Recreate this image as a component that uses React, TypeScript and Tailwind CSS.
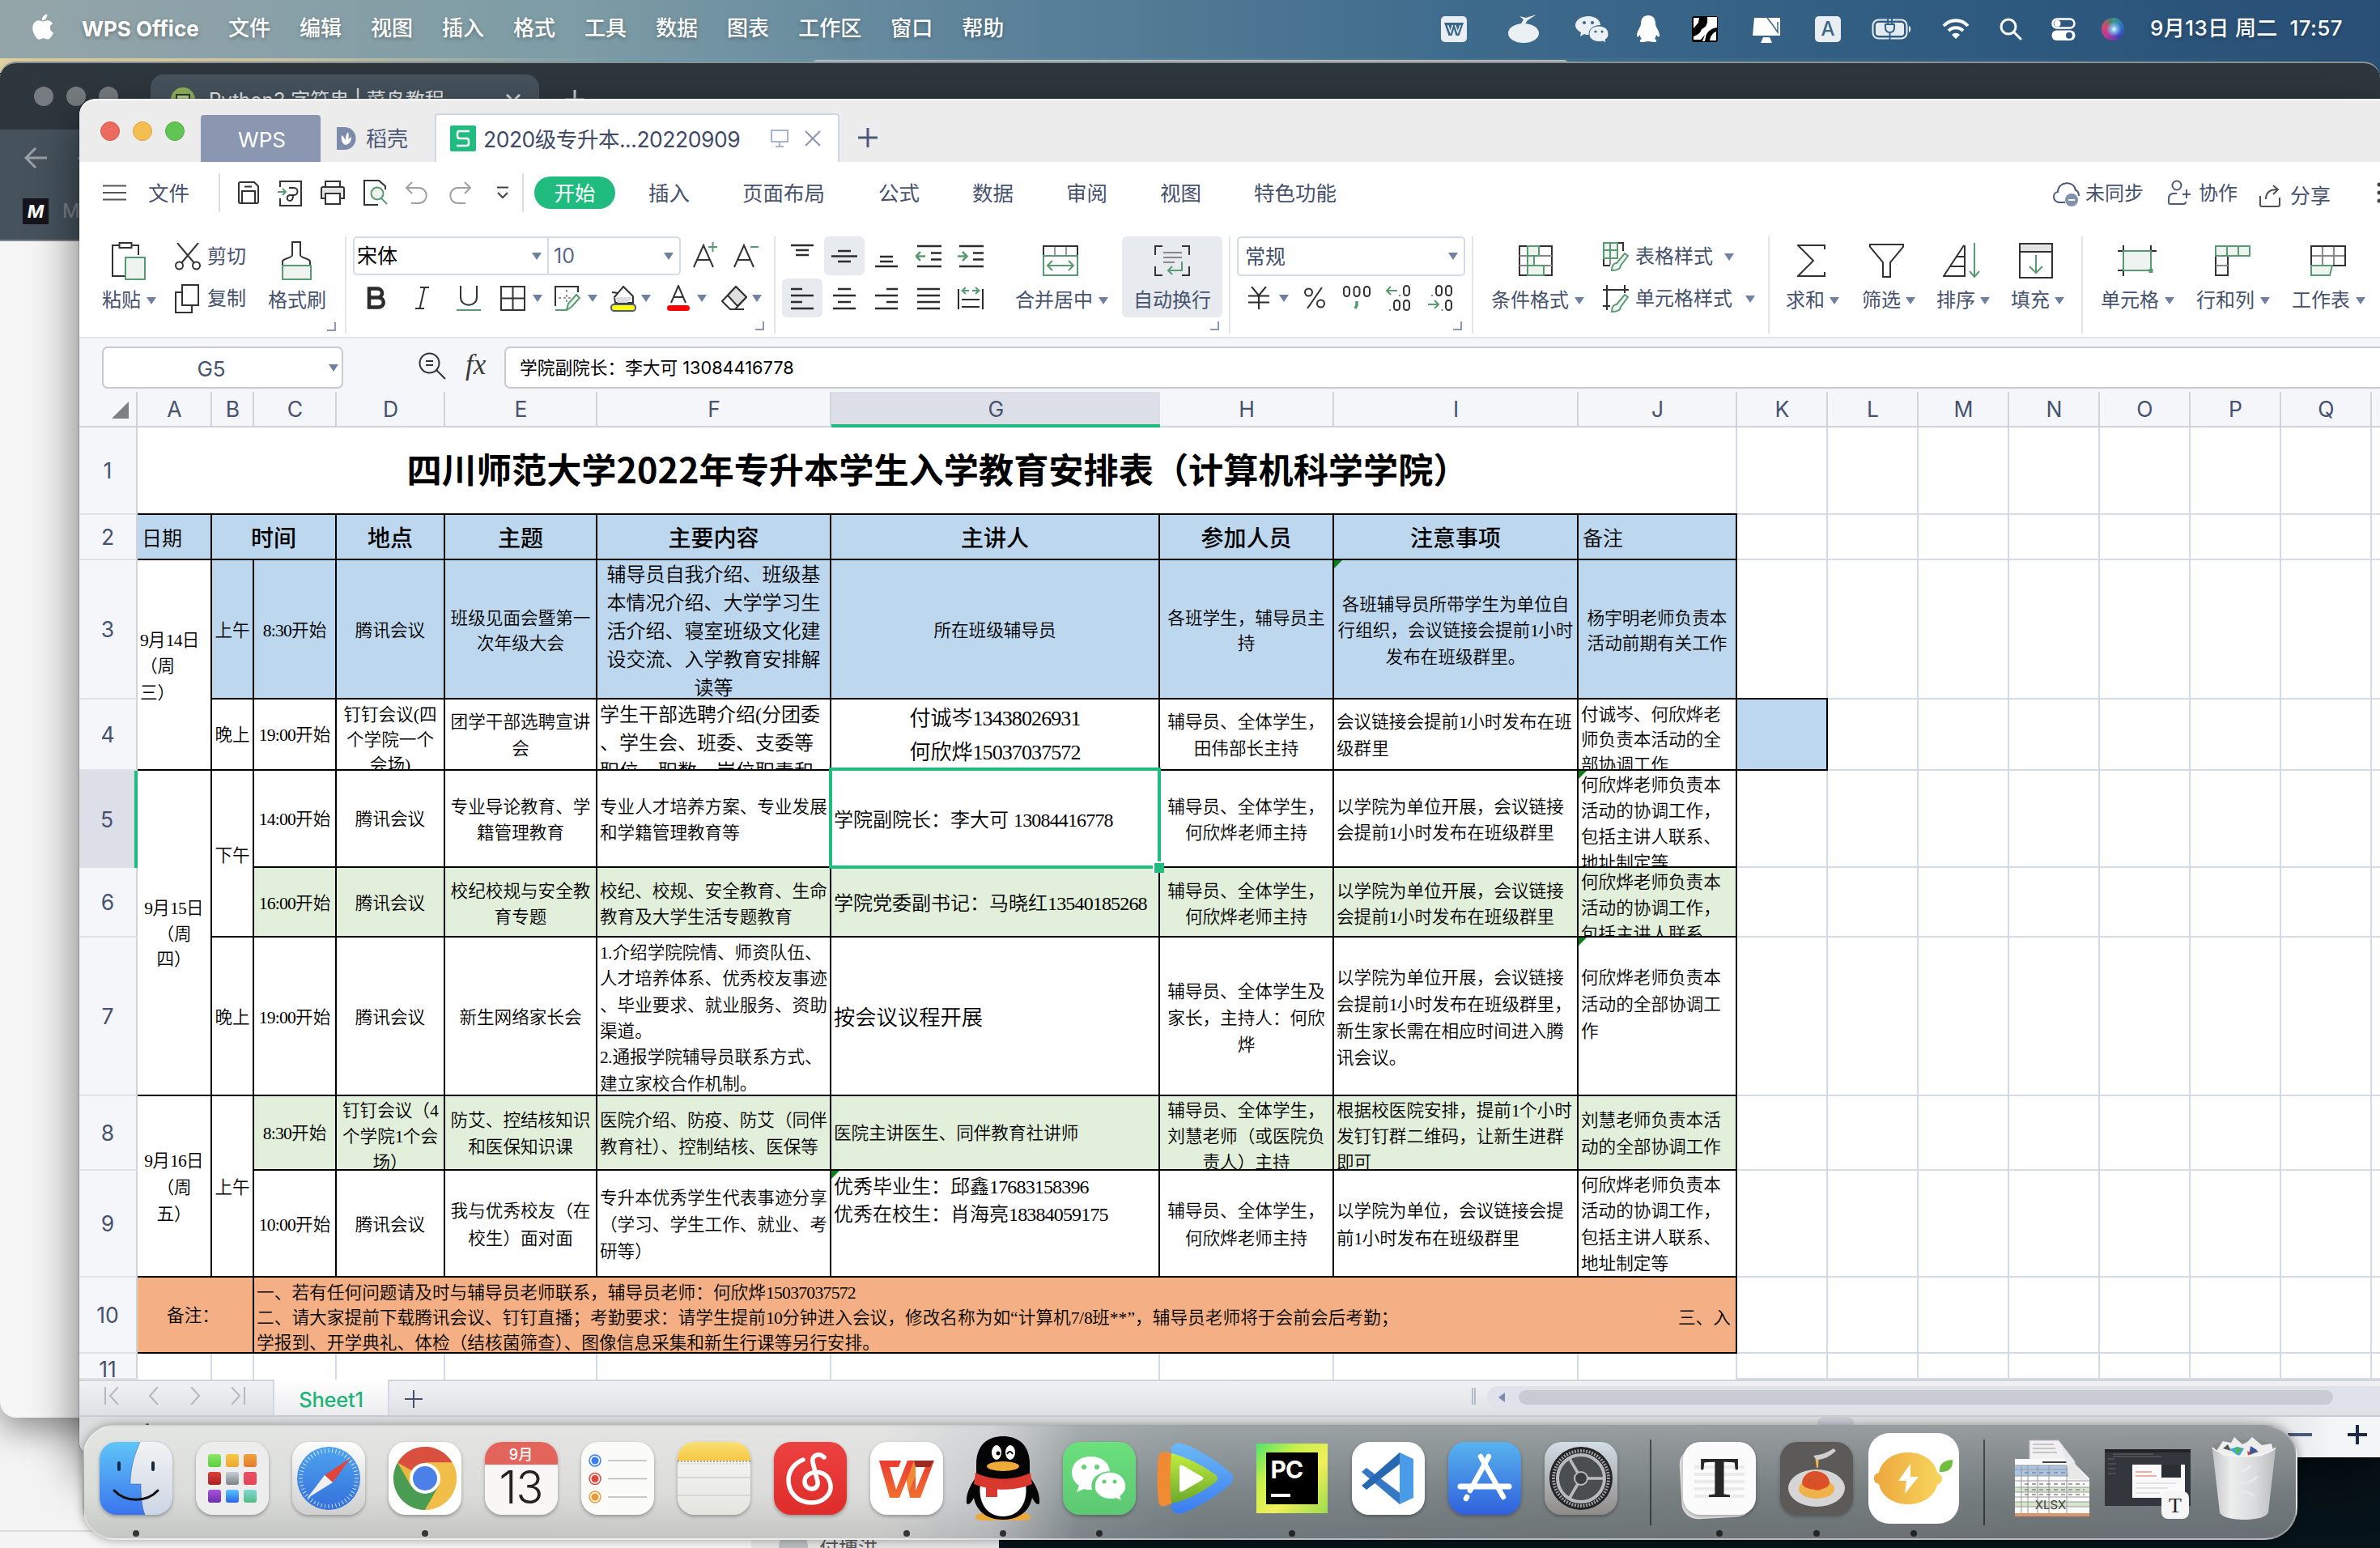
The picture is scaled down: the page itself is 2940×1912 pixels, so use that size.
import React from "react";

type Kids = { children?: React.ReactNode };

const INK = "#333333";
const LEAF = "#5a9a73";
const MIST = "#eef4f0";

function Svg({ w, h, c = "", children, sw = 2, stroke = INK }: Kids & { w: number; h: number; c?: string; sw?: number; stroke?: string }) {
  return (
    <svg width={w} height={h} viewBox={`0 0 ${w} ${h}`} className={`block shrink-0 ${c}`} fill="none" stroke={stroke} strokeWidth={sw}>
      {children}
    </svg>
  );
}

function Caret({ c = "" }: { c?: string }) {
  return (
    <svg width="12" height="9" viewBox="0 0 12 9" className={`block shrink-0 ${c}`}>
      <path d="M0 0h12l-6 9z" fill="#7080a0" />
    </svg>
  );
}

/* ------------------------------------------------------------------ */
/* System menu bar                                                     */
/* ------------------------------------------------------------------ */

const MENUS = ["文件", "编辑", "视图", "插入", "格式", "工具", "数据", "图表", "工作区", "窗口", "帮助"];

function MenuBar() {
  return (
    <div className="relative z-10 flex h-[72px] items-center bg-[linear-gradient(90deg,#94a5a9_0%,#7d9ca5_24%,#5a8199_43%,#3e6a8c_62%,#2f5b80_82%,#294f77_100%)] text-[26px] leading-[32px] font-medium text-white [text-shadow:0_2px_5px_rgba(0,0,0,0.3)]">
      <svg width="28" height="34" viewBox="0 0 28 34" className="mb-[4px] ml-[39px] block" fill="#fff">
        <path d="M19.3 0.5c.3 2-.6 4-1.700 5.400-1.200 1.500-3 2.500-4.700 2.400-.3-1.900.6-3.900 1.700-5.200C15.800 1.600 17.700.7 19.300.5zM26 12.100c-2 1.200-3.200 2.900-3.100 5.300 0 2.800 1.500 4.700 4 5.800-.5 1.500-1.200 3-2.100 4.400-1.300 2-2.700 4-4.900 4-2.100 0-2.800-1.300-5.300-1.300-2.400 0-3.200 1.300-5.200 1.400-2.100.1-3.700-2.200-5-4.100C1.600 23.500-.1 16.500 2.700 12c1.400-2.300 3.700-3.700 6.300-3.800 2.100 0 4 1.400 5.300 1.400 1.200 0 3.500-1.700 6-1.400 1 .1 3.900.4 5.700 3.900z" />
      </svg>
      <div className="ml-[34px] w-[146px] text-[26px] font-bold whitespace-nowrap">WPS Office</div>
      <div className="mb-[2px] ml-[35px] flex gap-[36px]">
        {MENUS.map((m) => (
          <span key={m}>{m}</span>
        ))}
      </div>
      <div className="ml-auto flex items-center">
        <Svg w={34} h={34} stroke="none">
          <rect x="1" y="1" width="32" height="32" rx="5" fill="#e9eef2" />
          <path d="M5 9h24l-5.500 16h-4L17 17l-2.500 8h-4z" fill="#3b6686" />
          <path d="M9.500 12l3.200 9 2.800-9M18.500 12l3.200 9L25 12" stroke="#e9eef2" strokeWidth="1.500" fill="none" />
        </Svg>
        <Svg w={40} h={36} c="ml-[49px]" stroke="none">
          <ellipse cx="20" cy="23" rx="19" ry="12" fill="#eaf0f3" />
          <path d="M16 13l4-7-5-4 8 2 13-4-11 7-4 6z" fill="#eaf0f3" />
        </Svg>
        <Svg w={42} h={34} c="ml-[44px]" stroke="none">
          <path d="M16 1c9 0 15 5 15 11-8 0-15 5-14 12-2 0-5 0-6-1l-5 3 1-5c-4-2-7-5-7-9C0 6 7 1 16 1z" fill="#eaf0f3" />
          <path d="M29 13c7 0 12 4 12 10 0 3-1 5-4 7l1 4-4-2c-9 2-17-2-17-9 0-6 5-10 12-10z" fill="#eaf0f3" stroke="#3b6686" strokeWidth="1" />
          <g fill="#3b6686">
            <circle cx="11" cy="9" r="2" />
            <circle cx="21" cy="9" r="2" />
            <circle cx="25" cy="20" r="1.600" />
            <circle cx="33" cy="20" r="1.600" />
          </g>
        </Svg>
        <Svg w={30} h={34} c="ml-[33px]" stroke="none">
          <path d="M15 0c7 0 9 5 9 11 0 3 5 8 5 14 0 2-2 2-4-1-1 3-1 4-2 5 3 1 3 4 0 4-4 0-6-1-8-1s-4 1-8 1c-3 0-3-3 0-4-1-1-2-2-2-5-2 3-4 3-4 1 0-6 5-11 5-14 0-6 2-11 9-11z" fill="#fff" />
        </Svg>
        <Svg w={32} h={32} c="ml-[39px]" stroke="none">
          <rect width="32" height="32" rx="3" fill="#000" />
          <path d="M19 1h12v13c-7 1-13 5-14 12l-1 5h-3l3-8-5 6H2v-4c6-2 9-5 10-9 4-2 8-4 7-15z" fill="#fff" />
          <path d="M2 2h7L8 8 2 15z" fill="#fff" />
          <path d="M30 19c-5 2-7 6-8 11h8z" fill="#fff" />
        </Svg>
        <Svg w={38} h={34} c="ml-[41px]" stroke="none">
          <path d="M4 3h32v22H2z" fill="#fff" />
          <path d="M15 27h8l3 7H12z" fill="#fff" />
          <path d="M20 3l7 9 6 9V8" stroke="#3b6686" strokeWidth="1.500" fill="none" />
        </Svg>
        <div className="ml-[41px] flex h-[32px] w-[32px] items-center justify-center rounded-[5px] bg-[#e9eef2] text-[24px] text-[#3a6386] [text-shadow:none]">A</div>
        <Svg w={50} h={26} c="ml-[38px]" stroke="#e3ebf0">
          <rect x="1.500" y="1.500" width="42" height="23" rx="7" />
          <rect x="5" y="5" width="35" height="16" rx="3.500" fill="#e3ebf0" stroke="none" />
          <path d="M46 9c3 1 3 7 0 8z" fill="#e3ebf0" stroke="none" />
          <path d="M17 7v4c0 5 3 6 5.500 6s5.500-1 5.500-6V7zM20 0v7M25 0v7M22.500 17v9" fill="#e3ebf0" stroke="#33608a" strokeWidth="2" />
        </Svg>
        <Svg w={34} h={26} c="ml-[37px]" stroke="#fff" sw={4}>
          <path d="M2 9C10 0 24 0 32 9M8 15c5-5 13-5 18 0" />
          <path d="M17 25l-5-5c3-3 7-3 10 0z" fill="#fff" stroke="none" />
        </Svg>
        <Svg w={28} h={28} c="ml-[37px]" stroke="#fff" sw={3}>
          <circle cx="11" cy="11" r="9" />
          <path d="M18 18l8 8" strokeLinecap="round" />
        </Svg>
        <Svg w={30} h={28} c="ml-[36px]" stroke="#fff" sw={2.5}>
          <rect x="1.500" y="1.500" width="27" height="11" rx="5.500" />
          <circle cx="7.500" cy="7" r="4" fill="#fff" stroke="none" />
          <rect x="0.500" y="15.500" width="29" height="12.500" rx="6" fill="#fff" stroke="none" />
          <circle cx="22" cy="21.700" r="4" fill="#31597f" stroke="none" />
        </Svg>
        <div className="ml-[32px] h-[28px] w-[28px] rounded-full bg-[radial-gradient(circle_at_55%_50%,#ffffff_0%,#7ab6e8_18%,transparent_45%),conic-gradient(from_0deg,#3a9b8a,#2b6fc4,#473dba,#b03a9b,#d8456b,#34906f)]" />
        <div className="mr-[33px] mb-[2px] ml-[32px] w-[251px] text-[26px] tracking-[0.016em] whitespace-pre">9月13日 周二  17:57</div>
      </div>
    </div>
  );
}

/* ------------------------------------------------------------------ */
/* Browser window in the background                                    */
/* ------------------------------------------------------------------ */

function BrowserWindow() {
  return (
    <div className="absolute top-[76px] left-0 h-[1675px] w-[2940px] overflow-hidden rounded-[20px] border-t-2 border-[#8b9296] bg-[#f6f6f6] shadow-[0_16px_40px_rgba(0,0,0,0.4)]">
      <div className="flex h-[82px] bg-[#2d373d]">
        <div className="mt-[29px] ml-[42px] flex gap-[16px]">
          <span className="h-[24px] w-[24px] rounded-full bg-[#767c7f]" />
          <span className="h-[24px] w-[24px] rounded-full bg-[#767c7f]" />
          <span className="h-[24px] w-[24px] rounded-full bg-[#767c7f]" />
        </div>
        <div className="mt-[14px] ml-[40px] flex h-[68px] w-[480px] rounded-t-[16px] bg-[#46535d] pt-[16px] pl-[25px] text-[24px] leading-[32px] text-[#e6e9eb]">
          <span className="flex h-[30px] w-[30px] justify-center rounded-full bg-[#8fb45c] pt-[8px]">
            <span className="h-[12px] w-[18px] border-2 border-[#2f3b2b] bg-[#b9d391]" />
          </span>
          <span className="ml-[17px] w-[367px] whitespace-nowrap">Python3 字符串 | 菜鸟教程</span>
          <Svg w={18} h={18} c="mt-[8px]" stroke="#d5dadd" sw={3}>
            <path d="M1 1l16 16M17 1L1 17" />
          </Svg>
        </div>
        <Svg w={24} h={24} c="mt-[33px] ml-[32px]" stroke="#c5cacd" sw={3}>
          <path d="M12 0v24M0 12h24" />
        </Svg>
      </div>
      <div className="h-[138px] border-b-2 border-[#7d868c] bg-[#46535d]">
        <div className="flex h-[70px] items-center pl-[30px]">
          <Svg w={28} h={26} stroke="#9aa2a7" sw={3}>
            <path d="M28 13H2M14 1L2 13l12 12" />
          </Svg>
          <span className="ml-[38px] h-[3px] w-[10px] bg-[#77828a]" />
        </div>
        <div className="flex h-[62px] items-center pl-[28px] text-[24px] text-[#7b868e]">
          <span className="flex h-[32px] w-[32px] items-center justify-center bg-[#15161b] text-[22px] font-bold text-white italic">M</span>
          <span className="ml-[17px]">M</span>
        </div>
      </div>
    </div>
  );
}

/* ------------------------------------------------------------------ */
/* Spreadsheet window: title bar and menus                             */
/* ------------------------------------------------------------------ */

function TitleBar() {
  return (
    <div className="flex h-[78px] items-end rounded-tl-[20px] border-t-2 border-white bg-[#ececec]">
      <div className="mb-[26px] ml-[26px] flex gap-[16px]">
        <span className="h-[24px] w-[24px] rounded-full border border-[#d9574c] bg-[#ec6a5e]" />
        <span className="h-[24px] w-[24px] rounded-full border border-[#dfa33c] bg-[#f4bf50]" />
        <span className="h-[24px] w-[24px] rounded-full border border-[#52a93f] bg-[#61c555]" />
      </div>
      <div className="ml-[20px] flex h-[58px] w-[148px] items-center justify-center rounded-t-[4px] bg-[#8b97b1] pt-[3px] pl-[3px] text-[26px] text-white">WPS</div>
      <div className="flex h-[58px] w-[141px] items-center pl-[20px] text-[26px] text-[#4d5a78]">
        <Svg w={24} h={28} stroke="none">
          <path d="M0 0h10c18 1 18 27 0 28H0z" fill="#7d8bab" />
          <path d="M6 10c2 1 4 4 5 7 0-4 0-8 3-11 1 4 1 6 0 9l4-3c0 5-2 9-7 10-4-1-6-6-5-12z" fill="#fff" />
        </Svg>
        <span className="ml-[12px]">稻壳</span>
      </div>
      <div className="flex h-[60px] w-[500px] items-center rounded-t-[4px] border-2 border-b-0 border-[#cfd7e8] bg-white pl-[17px] text-[#3f4a66]">
        <div className="flex h-[32px] w-[32px] items-center justify-center rounded-[2px] bg-[#20bb7e]">
          <Svg w={18} h={22} stroke="#fff" sw={2.5}>
            <path d="M17 2H4.500Q2 2 2 5v3q0 3 2.500 3h9q2.500 0 2.500 3v3q0 3-2.500 3H1" />
          </Svg>
        </div>
        <span className="mt-[3px] ml-[9px] w-[355px] text-[26.500px] tracking-[-0.018em] whitespace-nowrap">2020级专升本...20220909</span>
        <Svg w={22} h={22} stroke="#a9b4cd">
          <path d="M1 1h20v14H1zM11 15v6M6 21h10" />
        </Svg>
        <Svg w={20} h={20} c="ml-[20px]" stroke="#8b97b1">
          <path d="M1 1l18 18M19 1L1 19" />
        </Svg>
      </div>
      <Svg w={24} h={24} c="mb-[18px] ml-[23px]" stroke="#4d5a78" sw={3}>
        <path d="M12 0v24M0 12h24" />
      </Svg>
    </div>
  );
}

function MenuRow() {
  return (
    <div className="flex h-[80px] items-start text-[25.500px] leading-[32px] text-[#46526e]">
      <div className="flex h-[76px] items-center">
        <Svg w={29} h={20} c="ml-[29px]" stroke="#555">
          <path d="M0 1.500h29M0 10h29M0 18.500h29" />
        </Svg>
        <span className="mt-[2px] ml-[27px]">文件</span>
        <span className="ml-[36px] h-[48px] w-[2px] bg-[#dcdee3]" />
        <Svg w={26} h={28} c="ml-[22px]">
          <path d="M1 3q0-2 2-2h17l5 5v19q0 2-2 2H3q-2 0-2-2zM5 27V12h16v15M8 6.500h9" />
        </Svg>
        <Svg w={30} h={32} c="mt-[1px] ml-[23px]">
          <path d="M3 8V1h26v30H3v-9" />
          <path d="M14 9h6c6 0 6 9 0 9h-4c-6 0-5 7-1 7 3 0 4-3 4-7" />
          <path d="M0 14h10M6 10l4 4-4 4" stroke={LEAF} />
        </Svg>
        <Svg w={30} h={30} c="ml-[23px]">
          <path d="M6 8V1h18v7" />
          <path d="M5 22H1V10q0-2 2-2h24q2 0 2 2v12h-4" fill="#e3e3e3" />
          <path d="M6 16h18v13H6z" fill="#fff" />
        </Svg>
        <Svg w={30} h={32} c="ml-[23px]">
          <path d="M18 31H1V1h18l8 7v4" />
          <circle cx="17" cy="17" r="7.500" fill={MIST} stroke={LEAF} />
          <path d="M22 23l7 7" stroke={LEAF} />
        </Svg>
        <Svg w={27} h={28} c="ml-[22px]" stroke="#a0a0a0">
          <path d="M8 1L1 8l7 7M1 8h15c13 0 13 19 0 19H7" />
        </Svg>
        <Svg w={27} h={28} c="ml-[27px]" stroke="#a0a0a0">
          <path d="M19 1l7 7-7 7M26 8H11c-13 0-13 19 0 19h9" />
        </Svg>
        <Svg w={14} h={16} c="ml-[32px]" stroke="#444">
          <path d="M0 1.500h14M1 8l6 6 6-6" />
        </Svg>
        <span className="ml-[17px] h-[48px] w-[2px] bg-[#dcdee3]" />
        <span className="ml-[13px] flex h-[40px] w-[100px] items-center justify-center rounded-full bg-[#20bb7e] pt-[2px] text-white">开始</span>
        <div className="mt-[2px] flex">
          <span className="ml-[41px]">插入</span>
          <span className="ml-[65px]">页面布局</span>
          <span className="ml-[66px]">公式</span>
          <span className="ml-[65px]">数据</span>
          <span className="ml-[65px]">审阅</span>
          <span className="ml-[65px]">视图</span>
          <span className="ml-[65px]">特色功能</span>
        </div>
      </div>
      <div className="mr-[-2px] ml-auto flex h-[76px] items-center text-[24px]">
        <Svg w={34} h={32} c="mt-[4px]" stroke="#4d5a78">
          <path d="M15 26H8C-1 25-1 14 6 13c0-13 20-15 22-2 3 1 4 3 4 7" />
          <circle cx="23" cy="23" r="8" fill="#8391b1" stroke="none" />
          <path d="M19 23h8" stroke="#fff" />
        </Svg>
        <span className="mt-[2px] ml-[6px]">未同步</span>
        <Svg w={30} h={32} c="ml-[29px]" stroke="#4d5a78">
          <circle cx="12" cy="7" r="5.500" />
          <path d="M12 17H8c-4 0-6 3-6 7v4q0 2 2 2h16q3 0 3-3M19 18h10M24 12v11" />
        </Svg>
        <span className="mt-[2px] ml-[9px]">协作</span>
        <Svg w={29} h={28} c="mt-[8px] ml-[27px]" stroke="#4f4f52">
          <path d="M1 14v11q0 2 2 2h20q2 0 2-2v-9" />
          <path d="M8 18c0-8 4-12 14-12M17 1l6 5-6 6" />
        </Svg>
        <span className="mt-[7px] ml-[9px] text-[25px]">分享</span>
        <Svg w={6} h={26} c="ml-[57px]" stroke="none">
          <g fill="#444">
            <circle cx="3" cy="3" r="2.500" />
            <circle cx="3" cy="13" r="2.500" />
            <circle cx="3" cy="23" r="2.500" />
          </g>
        </Svg>
      </div>
    </div>
  );
}

/* ------------------------------------------------------------------ */
/* Ribbon                                                              */
/* ------------------------------------------------------------------ */

function Corner({ c = "" }: { c?: string }) {
  return <span className={`block h-[11px] w-[11px] shrink-0 border-r-2 border-b-2 border-[#8b97b1] ${c}`} />;
}

function Big({ c, iconC, label, caret = "", children }: Kids & { c: string; iconC: string; label: string; caret?: string }) {
  return (
    <div className={`shrink-0 pt-[6px] ${c}`}>
      <div className={`flex h-[48px] items-center ${iconC}`}>{children}</div>
      <div className="mt-[12px] flex h-[26px] items-center whitespace-nowrap">
        {label}
        {caret && <Caret c={caret} />}
      </div>
    </div>
  );
}

function Lines({ rows, c = "" }: { rows: [number, number, number][]; c?: string }) {
  return (
    <Svg w={32} h={30} c={c} sw={2.5} stroke="#2c2c2c">
      {rows.map(([x1, x2, y]) => (
        <path key={y} d={`M${x1} ${y}H${x2}`} />
      ))}
    </Svg>
  );
}

function Sq({ on = false, children }: Kids & { on?: boolean }) {
  return <div className={`flex h-[48px] w-[50px] items-center justify-center rounded-[6px] ${on ? "bg-[#e7eaee]" : ""}`}>{children}</div>;
}

function Ribbon() {
  return (
    <div className="flex h-[138px] overflow-hidden border-b-2 border-[#e3e5ea] pt-[12px] text-[24px] leading-[26px] text-[#46526e]">
      <div className="flex h-[120px] w-[330px] shrink-0 border-r-2 border-[#e3e5ea]">
        <Big c="ml-[28px] w-[68px]" iconC="pl-[12px]" label="粘贴" caret="ml-[7px]">
          <Svg w={43} h={47}>
            <path d="M10 4H1v38h17M25 4h8v12" />
            <path d="M9.500 1h15v6h-15z" />
            <path d="M17 19h24v27H17z" fill={MIST} stroke={LEAF} />
          </Svg>
        </Big>
        <div className="ml-[22px] w-[88px]">
          <div className="flex h-[50px] items-center gap-[8px]">
            <Svg w={32} h={34}>
              <path d="M3 0l21 25M29 0L8 25" />
              <circle cx="5.500" cy="28" r="4.500" />
              <circle cx="26.500" cy="28" r="4.500" />
            </Svg>
            剪切
          </div>
          <div className="mt-[2px] flex h-[50px] items-center gap-[8px]">
            <Svg w={32} h={36}>
              <path d="M9 10H1v25h20v-9" />
              <path d="M9 1h20v25H9z" fill="#fff" />
            </Svg>
            复制
          </div>
        </div>
        <Big c="ml-[27px] w-[72px]" iconC="pl-[17px]" label="格式刷">
          <Svg w={37} h={48}>
            <path d="M1 30v-5c0-4 12-4 12-8V1h10v16c0 4 12 4 12 8v5" />
            <path d="M1 30h35v17H1z" fill={MIST} stroke={LEAF} />
          </Svg>
        </Big>
        <Corner c="mb-[3px] ml-[1px] self-end" />
      </div>

      <div className="h-[120px] w-[530px] shrink-0 border-r-2 border-[#e3e5ea] pl-[8px]">
        <div className="flex h-[48px] items-center">
          <div className="flex h-[48px] w-[242px] items-center rounded-l-[5px] border-2 border-[#d3dbe9] pl-[3px] text-[25px] text-black">
            宋体
            <Caret c="mr-[7px] ml-auto" />
          </div>
          <div className="flex h-[48px] w-[163px] items-center rounded-r-[5px] border-2 border-l-0 border-[#d3dbe9] pl-[6px] text-[25px] text-[#5a6785]">
            10
            <Caret c="mr-[7px] ml-auto" />
          </div>
          <Svg w={31} h={32} c="mb-[2px] ml-[15px]">
            <path d="M1 31L13 4l12 27M5 22h16" />
            <path d="M19 6h11M24.500 0v12" stroke={LEAF} />
          </Svg>
          <Svg w={31} h={32} c="mb-[2px] ml-[19px]">
            <path d="M1 31L13 4l12 27M5 22h16" />
            <path d="M21 6h10" stroke={LEAF} />
          </Svg>
        </div>
        <div className="mt-[4px] flex h-[48px] items-center">
          <Svg w={24} h={28} c="ml-[17px]" sw={4.5} stroke="#2c2c2c">
            <path d="M3 2.500h10c8 0 8 11 0 11H3zM3 13.500h11c9 0 9 12 0 12H3z" />
          </Svg>
          <Svg w={17} h={28} c="ml-[36px]">
            <path d="M6 1h11M0 27h11M11.500 1l-6 26" />
          </Svg>
          <Svg w={30} h={31} c="ml-[34px]">
            <path d="M5 0v14c0 13 20 13 20 0V0" />
            <path d="M0 30h30" stroke={LEAF} />
          </Svg>
          <Svg w={31} h={31} c="ml-[24px]">
            <path d="M1 1h29v29H1zM15.500 1v29M1 15.500h29" />
          </Svg>
          <Caret c="ml-[9px]" />
          <Svg w={33} h={31} c="ml-[15px]">
            <path d="M29 8V1H1v24" />
            <path d="M15 5v18M5 15h16" stroke="#999" strokeDasharray="3 3" />
            <path d="M1 30h14l2-8 10-11 4 4-10 11-6 4" stroke={LEAF} fill={MIST} />
          </Svg>
          <Caret c="ml-[8px]" />
          <Svg w={32} h={33} c="ml-[16px]">
            <path d="M5 15L16 2l12 12v8H6z" fill="#fff" />
            <path d="M5 15h22l-6 7H9z" fill="#ddd" stroke="none" />
            <path d="M2 9l8 1" />
            <rect x="1" y="24" width="30" height="8" rx="3.500" fill="#ffff00" stroke="#4a5a85" />
          </Svg>
          <Caret c="ml-[6px]" />
          <Svg w={28} h={33} c="ml-[20px]">
            <path d="M5 22L14 1l9 21M8 15h12" />
            <rect x="0" y="25" width="28" height="7" rx="3.500" fill="#ff0000" stroke="none" />
          </Svg>
          <Caret c="ml-[9px]" />
          <Svg w={32} h={30} c="ml-[18px]">
            <path d="M18 1l13 13-14 15h-6L1 19z" fill="#fff" />
            <path d="M18 1l13 13-11 11L8 12z" fill="#e0e0e0" />
            <path d="M11 29h17" />
          </Svg>
          <Caret c="ml-[6px]" />
        </div>
        <Corner c="mt-[5px] mr-[12px] ml-auto" />
      </div>

      <div className="flex h-[120px] w-[562px] shrink-0 border-r-2 border-[#e3e5ea] pl-[8px]">
        <div className="shrink-0">
          <div className="flex gap-[2px]">
            <Sq>
              <Lines rows={[[2, 30, 2], [8, 24, 8], [8, 24, 14]]} />
            </Sq>
            <Sq on>
              <Lines rows={[[8, 24, 9], [0, 32, 15.500], [8, 24, 22]]} />
            </Sq>
            <Sq>
              <Lines rows={[[8, 24, 16], [8, 24, 22], [2, 30, 28]]} />
            </Sq>
            <Sq>
              <Svg w={32} h={30} sw={2.5} stroke="#2c2c2c">
                <path d="M2 3h30M19 11.500h13M19 19.500h13M2 28h30" />
                <path d="M12 15.500H1M6 10l-5.500 5.500L6 21" stroke={LEAF} />
              </Svg>
            </Sq>
            <Sq>
              <Svg w={32} h={30} sw={2.5} stroke="#2c2c2c">
                <path d="M2 3h30M19 11.500h13M19 19.500h13M2 28h30" />
                <path d="M0 15.500h11M6 10l5.500 5.500L6 21" stroke={LEAF} />
              </Svg>
            </Sq>
          </div>
          <div className="mt-[4px] flex gap-[2px]">
            <Sq on>
              <Lines rows={[[2, 16, 4], [2, 30, 12], [2, 16, 20], [2, 30, 28]]} />
            </Sq>
            <Sq>
              <Lines rows={[[8, 24, 4], [2, 30, 12], [8, 24, 20], [2, 30, 28]]} />
            </Sq>
            <Sq>
              <Lines rows={[[16, 30, 4], [2, 30, 12], [16, 30, 20], [2, 30, 28]]} />
            </Sq>
            <Sq>
              <Lines rows={[[2, 30, 4], [2, 30, 12], [2, 30, 20], [2, 30, 28]]} />
            </Sq>
            <Sq>
              <Svg w={32} h={30} stroke="#2c2c2c">
                <path d="M1 4v25M31 4v25M5 17h22M5 26h22" />
                <path d="M5 6h9M18 6h9M10 2L5.500 6l4.500 4M22 2l4.500 4-4.500 4" stroke={LEAF} />
              </Svg>
            </Sq>
          </div>
        </div>
        <Big c="ml-[30px] w-[116px]" iconC="pl-[34px]" label="合并居中" caret="ml-[7px]">
          <Svg w={44} h={38}>
            <path d="M1 13V1h42v12" />
            <path d="M15 2v10M29 2v10" stroke="#999" />
            <path d="M1 13h42v24H1z" fill="#fff" stroke={LEAF} />
            <path d="M6 25h32M12 19l-6 6 6 6M32 19l6 6-6 6" stroke={LEAF} />
          </Svg>
        </Big>
        <div className="ml-[16px] w-[124px]">
          <div className="h-[100px] rounded-[6px] bg-[#e7eaee]">
            <Big c="pl-[14px]" iconC="pl-[26px]" label="自动换行">
              <Svg w={44} h={38}>
                <path d="M10 1H1v11M34 1h9v11M1 26v11h9M43 26v11h-9" />
                <path d="M11 9h23M11 15h23M11 21h14" stroke="#888" />
                <path d="M34 20v11H17M22 26l-5 5 5 5" stroke={LEAF} />
              </Svg>
            </Big>
          </div>
          <Corner c="mt-[5px] mr-[4px] ml-auto" />
        </div>
      </div>

      <div className="h-[120px] w-[300px] shrink-0 border-r-2 border-[#e3e5ea] pl-[8px]">
        <div className="flex h-[49px] w-[282px] items-center rounded-[5px] border-2 border-[#d3dbe9] pl-[8px] text-[25px]">
          常规
          <Caret c="mr-[7px] ml-auto" />
        </div>
        <div className="mt-[3px] flex h-[48px] items-center text-[#333]">
          <Svg w={26} h={28} c="ml-[14px]" stroke="#2c2c2c">
            <path d="M4 0l9 11 9-11M0 11.500h26M0 19.500h26M13 11v17" />
          </Svg>
          <Caret c="ml-[12px]" />
          <Svg w={26} h={26} c="ml-[19px]">
            <circle cx="5.500" cy="6" r="4.500" />
            <circle cx="20.500" cy="20" r="4.500" />
            <path d="M22 0L4 26" />
          </Svg>
          <Svg w={34} h={30} c="ml-[22px]">
            <rect x="1" y="1" width="7" height="12" rx="3.500" />
            <rect x="13.500" y="1" width="7" height="12" rx="3.500" />
            <rect x="26" y="1" width="7" height="12" rx="3.500" />
            <path d="M17 19v5l-2 4" stroke={LEAF} strokeWidth="3.500" />
          </Svg>
          <Svg w={31} h={33} c="ml-[19px]">
            <rect x="22" y="1" width="7" height="12" rx="3.500" />
            <rect x="10" y="19" width="7" height="12" rx="3.500" />
            <rect x="22" y="19" width="7" height="12" rx="3.500" />
            <path d="M14 7H1M6 2L1 7l5 5M17 12v2M5 30v2" stroke={LEAF} />
          </Svg>
          <Svg w={31} h={33} c="ml-[21px]">
            <rect x="10" y="1" width="7" height="12" rx="3.500" />
            <rect x="22" y="1" width="7" height="12" rx="3.500" />
            <rect x="22" y="19" width="7" height="12" rx="3.500" />
            <path d="M0 24h13M8 19l5 5-5 5M5 12v2M17.500 30v2" stroke={LEAF} />
          </Svg>
        </div>
        <Corner c="mt-[5px] mr-[12px] ml-auto" />
      </div>

      <div className="flex h-[120px] w-[366px] shrink-0 border-r-2 border-[#e3e5ea]">
        <Big c="ml-[22px] w-[116px]" iconC="pl-[34px]" label="条件格式" caret="ml-[7px]">
          <Svg w={42} h={38}>
            <path d="M1 1h40v36H1z" />
            <path d="M1 13h40M1 25h40" stroke="#888" />
            <path d="M11 1h14v12H11zM11 13h8v12h-8zM11 25h20v12H11z" fill={MIST} stroke={LEAF} />
          </Svg>
        </Big>
        <div className="ml-[22px]">
          <div className="flex h-[50px] items-center">
            <Svg w={32} h={36}>
              <path d="M9 29H1V1h24v10" />
              <path d="M1 1h17v19H1zM1 10h17M9 1v19" fill={MIST} stroke={LEAF} />
              <path d="M9 20v8" stroke="#888" />
              <path d="M27 14l4 3-9 12c0 4-4 6-11 6 0-5 2-9 6-9z" fill={MIST} stroke={LEAF} />
            </Svg>
            <span className="ml-[8px]">表格样式</span>
            <Caret c="ml-[14px]" />
          </div>
          <div className="mt-[2px] flex h-[50px] items-center">
            <Svg w={32} h={34}>
              <path d="M0 6h32M5 0v31M27 0v10M0 26h9" />
              <path d="M27 12l4 3-9 12c0 4-4 6-11 6 0-5 2-9 6-9z" fill={MIST} stroke={LEAF} />
            </Svg>
            <span className="ml-[8px]">单元格样式</span>
            <Caret c="ml-[16px]" />
          </div>
        </div>
      </div>

      <div className="flex h-[120px] w-[387px] shrink-0 border-r-2 border-[#e3e5ea]">
        <Big c="ml-[20px] w-[66px]" iconC="pl-[14px]" label="求和" caret="ml-[6px]">
          <Svg w={35} h={40}>
            <path d="M34 6V1H1l19 19L1 39h33v-5" />
          </Svg>
        </Big>
        <Big c="ml-[28px] w-[66px]" iconC="pl-[9px]" label="筛选" caret="ml-[6px]">
          <Svg w={43} h={42}>
            <path d="M1 1h41v3L26 23v18h-9V23L1 4z" />
          </Svg>
        </Big>
        <Big c="ml-[26px] w-[66px]" iconC="pl-[8px]" label="排序" caret="ml-[6px]">
          <Svg w={47} h={44}>
            <path d="M27 3v38H1L26 3M16 17h11M9 29h18" />
            <path d="M39 0v42M33 35l6 7 6-7" stroke={LEAF} />
          </Svg>
        </Big>
        <Big c="ml-[26px] w-[66px]" iconC="pl-[10px]" label="填充" caret="ml-[6px]">
          <Svg w={42} h={44}>
            <path d="M1 1h40v42H1z" />
            <path d="M1 1h40v10H1z" fill="#e3e3e3" />
            <path d="M21 15v22M13 29l8 8 8-8" stroke={LEAF} />
          </Svg>
        </Big>
      </div>

      <div className="flex h-[120px] shrink-0">
        <Big c="ml-[22px] w-[91px]" iconC="pl-[21px]" label="单元格" caret="ml-[7px]">
          <Svg w={48} h={38}>
            <path d="M7 0v38M0 7h48M41 0v7M0 31h8" />
            <path d="M7 7h34v24H7z" fill={MIST} stroke={LEAF} />
            <path d="M41 29v5" stroke={LEAF} strokeWidth="5" />
          </Svg>
        </Big>
        <Big c="ml-[27px] w-[91px]" iconC="pl-[23px]" label="行和列" caret="ml-[7px]">
          <Svg w={44} h={38}>
            <path d="M1 12v25h15V12" />
            <path d="M1 25h15" stroke="#888" />
            <path d="M1 1h42v12H1zM15 1v12M29 1v12" fill={MIST} stroke={LEAF} />
          </Svg>
        </Big>
        <Big c="ml-[27px] w-[91px]" iconC="pl-[23px]" label="工作表" caret="ml-[7px]">
          <Svg w={44} h={38}>
            <path d="M15 2v22M29 2v22M1 13h42" stroke="#888" />
            <path d="M1 25V1h42v24H27" />
            <path d="M1 25h26l-3 12H1z" fill={MIST} stroke={LEAF} />
          </Svg>
        </Big>
      </div>
    </div>
  );
}

function FormulaBar() {
  return (
    <div className="flex h-[66px] bg-[#f5f6f9] pt-[10px]">
      <div className="ml-[28px] flex h-[52px] w-[298px] shrink-0 items-center rounded-[7px] border-2 border-[#c9cacc] bg-white text-[26px] text-[#46526e]">
        <span className="mt-[2px] ml-[8px] w-[250px] text-center">G5</span>
        <Caret c="ml-[20px]" />
      </div>
      <Svg w={34} h={34} c="mt-[7px] ml-[93px]">
        <circle cx="13.500" cy="13.500" r="12" />
        <path d="M22 22l11 11M9 11h9M9 16h9" />
      </Svg>
      <span className="mt-[5px] ml-[24px] w-[48px] text-[35px] leading-[36px] text-[#3a3a3a] italic [font-family:'Liberation_Serif',serif]">fx</span>
      <div className="flex h-[52px] flex-1 items-center rounded-l-[7px] border-2 border-r-0 border-[#c9cacc] bg-white pl-[17px] text-[21.700px] text-black">学院副院长：李大可 13084416778</div>
    </div>
  );
}

/* ------------------------------------------------------------------ */
/* Sheet                                                               */
/* ------------------------------------------------------------------ */

const ROW_TOP = [0, 528, 636, 692, 864, 952, 1072, 1158, 1354, 1446, 1578, 1672];
const COLS = "ABCDEFGHIJKLMNOPQ".split("");

type Cell = {
  at: string;
  span?: [number, number];
  y: number;
  lh?: number;
  fs?: number;
  left?: boolean;
  mark?: boolean;
  t: string[];
};

const CELLS: Cell[] = [
  { at: "A3", span: [1, 2], y: 790, lh: 32.5, left: true, t: ["9月14日", "（周", "三）"] },
  { at: "B3", y: 778, t: ["上午"] },
  { at: "C3", y: 778, t: ["8:30开始"] },
  { at: "D3", y: 778, t: ["腾讯会议"] },
  { at: "E3", y: 763, lh: 31, t: ["班级见面会暨第一", "次年级大会"] },
  { at: "F3", y: 709, lh: 35, fs: 24, t: ["辅导员自我介绍、班级基", "本情况介绍、大学学习生", "活介绍、寝室班级文化建", "设交流、入学教育安排解", "读等"] },
  { at: "G3", y: 778, t: ["所在班级辅导员"] },
  { at: "H3", y: 763, lh: 31, t: ["各班学生，辅导员主", "持"] },
  { at: "I3", y: 746, lh: 32.5, mark: true, t: ["各班辅导员所带学生为单位自", "行组织，会议链接会提前1小时", "发布在班级群里。"] },
  { at: "J3", y: 763, lh: 31, t: ["杨宇明老师负责本", "活动前期有关工作"] },
  { at: "B4", y: 907, t: ["晚上"] },
  { at: "C4", y: 907, t: ["19:00开始"] },
  { at: "D4", y: 882, lh: 31, t: ["钉钉会议(四", "个学院一个", "会场)"] },
  { at: "E4", y: 891, lh: 33, t: ["团学干部选聘宣讲", "会"] },
  { at: "F4", y: 882, lh: 35, fs: 24, left: true, t: ["学生干部选聘介绍(分团委", "、学生会、班委、支委等", "职位、职数、岗位职责和"] },
  { at: "G4", y: 887, lh: 42, fs: 26, t: ["付诚岑13438026931", "何欣烨15037037572"] },
  { at: "H4", y: 891, lh: 33, t: ["辅导员、全体学生，", "田伟部长主持"] },
  { at: "I4", y: 891, lh: 33, left: true, t: ["会议链接会提前1小时发布在班", "级群里"] },
  { at: "J4", y: 882, lh: 31, left: true, t: ["付诚岑、何欣烨老", "师负责本活动的全", "部协调工作"] },
  { at: "A5", span: [1, 3], y: 1122, lh: 31.5, t: ["9月15日", "（周", "四）"] },
  { at: "B5", span: [1, 2], y: 1056, t: ["下午"] },
  { at: "C5", y: 1011, t: ["14:00开始"] },
  { at: "D5", y: 1011, t: ["腾讯会议"] },
  { at: "E5", y: 996, lh: 32.5, t: ["专业导论教育、学", "籍管理教育"] },
  { at: "F5", y: 996, lh: 32.5, left: true, t: ["专业人才培养方案、专业发展", "和学籍管理教育等"] },
  { at: "G5", y: 1012, fs: 24, left: true, t: ["学院副院长：李大可 13084416778"] },
  { at: "H5", y: 996, lh: 32.5, t: ["辅导员、全体学生，", "何欣烨老师主持"] },
  { at: "I5", y: 996, lh: 32.5, left: true, t: ["以学院为单位开展，会议链接", "会提前1小时发布在班级群里"] },
  { at: "J5", y: 969, lh: 32, left: true, mark: true, t: ["何欣烨老师负责本", "活动的协调工作，", "包括主讲人联系、", "地址制定等"] },
  { at: "C6", y: 1115, t: ["16:00开始"] },
  { at: "D6", y: 1115, t: ["腾讯会议"] },
  { at: "E6", y: 1100, lh: 32, t: ["校纪校规与安全教", "育专题"] },
  { at: "F6", y: 1100, lh: 32, left: true, t: ["校纪、校规、安全教育、生命", "教育及大学生活专题教育"] },
  { at: "G6", y: 1115, fs: 24, left: true, t: ["学院党委副书记：马晓红13540185268"] },
  { at: "H6", y: 1100, lh: 32, t: ["辅导员、全体学生，", "何欣烨老师主持"] },
  { at: "I6", y: 1100, lh: 32, left: true, t: ["以学院为单位开展，会议链接", "会提前1小时发布在班级群里"] },
  { at: "J6", y: 1089, lh: 32, left: true, t: ["何欣烨老师负责本", "活动的协调工作，", "包括主讲人联系、"] },
  { at: "B7", y: 1256, t: ["晚上"] },
  { at: "C7", y: 1256, t: ["19:00开始"] },
  { at: "D7", y: 1256, t: ["腾讯会议"] },
  { at: "E7", y: 1256, t: ["新生网络家长会"] },
  { at: "F7", y: 1176, lh: 32.4, left: true, t: ["1.介绍学院院情、师资队伍、", "人才培养体系、优秀校友事迹", "、毕业要求、就业服务、资助", "渠道。", "2.通报学院辅导员联系方式、", "建立家校合作机制。"] },
  { at: "G7", y: 1257, fs: 26.3, left: true, t: ["按会议议程开展"] },
  { at: "H7", y: 1224, lh: 33, t: ["辅导员、全体学生及", "家长，主持人：何欣", "烨"] },
  { at: "I7", y: 1207, lh: 33, left: true, t: ["以学院为单位开展，会议链接", "会提前1小时发布在班级群里，", "新生家长需在相应时间进入腾", "讯会议。"] },
  { at: "J7", y: 1207, lh: 33, left: true, mark: true, t: ["何欣烨老师负责本", "活动的全部协调工", "作"] },
  { at: "A8", span: [1, 2], y: 1433, lh: 33, t: ["9月16日", "（周", "五）"] },
  { at: "B8", span: [1, 2], y: 1466, t: ["上午"] },
  { at: "C8", y: 1399, t: ["8:30开始"] },
  { at: "D8", y: 1371, lh: 32, t: ["钉钉会议（4", "个学院1个会", "场）"] },
  { at: "E8", y: 1383, lh: 33, t: ["防艾、控结核知识", "和医保知识课"] },
  { at: "F8", y: 1383, lh: 33, left: true, t: ["医院介绍、防疫、防艾（同伴", "教育社）、控制结核、医保等"] },
  { at: "G8", y: 1399, left: true, t: ["医院主讲医生、同伴教育社讲师"] },
  { at: "H8", y: 1371, lh: 32, t: ["辅导员、全体学生，", "刘慧老师（或医院负", "责人）主持"] },
  { at: "I8", y: 1371, lh: 32, left: true, t: ["根据校医院安排，提前1个小时", "发钉钉群二维码，让新生进群", "即可"] },
  { at: "J8", y: 1383, lh: 33, left: true, t: ["刘慧老师负责本活", "动的全部协调工作"] },
  { at: "C9", y: 1512, t: ["10:00开始"] },
  { at: "D9", y: 1512, t: ["腾讯会议"] },
  { at: "E9", y: 1495, lh: 34.5, t: ["我与优秀校友（在", "校生）面对面"] },
  { at: "F9", y: 1479, lh: 33, left: true, t: ["专升本优秀学生代表事迹分享", "（学习、学生工作、就业、考", "研等）"] },
  { at: "G9", y: 1465, lh: 34, fs: 24, left: true, mark: true, t: ["优秀毕业生：邱鑫17683158396", "优秀在校生：肖海亮18384059175"] },
  { at: "H9", y: 1495, lh: 34.5, t: ["辅导员、全体学生，", "何欣烨老师主持"] },
  { at: "I9", y: 1495, lh: 34.5, left: true, t: ["以学院为单位，会议链接会提", "前1小时发布在班级群里"] },
  { at: "J9", y: 1463, lh: 32.5, left: true, t: ["何欣烨老师负责本", "活动的协调工作，", "包括主讲人联系、", "地址制定等"] },
];

function fill(at: string) {
  const row = Number(at.slice(1));
  if (row === 3 && at !== "A3") return "bg-[#bdd7ee]";
  if (row === 6) return "bg-[#e2efda]";
  if (row === 8 && at !== "A8" && at !== "B8") return "bg-[#e2efda]";
  return "bg-white";
}

/* Latin runs keep the regular serif weight and sit a little tighter than the ideographs. */
function Mixed({ text }: { text: string }) {
  return (
    <>
      {text.split(/([0-9:]+|[()./*“”]+)/).map((part, i) =>
        i % 2 ? (
          <span key={i} className={/[0-9]/.test(part) ? "font-normal tracking-[-0.035em]" : "font-normal"}>
            {part}
          </span>
        ) : (
          part
        ),
      )}
    </>
  );
}

function place(at: string, cols = 1, rows = 1) {
  const col = COLS.indexOf(at[0]) + 2;
  const row = Number(at.slice(1)) + 1;
  return { gridColumn: `${col} / span ${cols}`, gridRow: `${row} / span ${rows}` };
}

function DataCell({ cell }: { cell: Cell }) {
  const row = Number(cell.at.slice(1));
  const lh = cell.lh ?? 32;
  const [cs, rs] = cell.span ?? [1, 1];
  const selected = cell.at === "G5";
  return (
    <div
      className={`relative min-w-0 border-r-2 border-b-2 border-black font-[350] whitespace-pre ${selected ? "" : "overflow-hidden"} ${cell.left ? "pl-[3px] text-left" : "text-center"} ${fill(cell.at)}`}
      style={{ ...place(cell.at, cs, rs), paddingTop: cell.y + 1 - ROW_TOP[row] - lh / 2, fontSize: cell.fs ?? 21.6, lineHeight: `${lh}px` }}
    >
      {cell.t.map((line, i) => (
        <div key={i} className="flex" style={{ justifyContent: cell.left ? "flex-start" : "center" }}>
          <span>
            <Mixed text={line} />
          </span>
        </div>
      ))}
      {cell.mark && <span className="absolute top-0 left-0 h-[10px] w-[10px] bg-[#0a8017] [clip-path:polygon(0_0,100%_0,0_100%)]" />}
      {selected && (
        <>
          <span className="absolute -top-[4px] -right-[3px] -bottom-[3px] -left-[3px] z-10 border-4 border-[#20bb7e]" />
          <span className="absolute -right-[7px] -bottom-[8px] z-20 h-[14px] w-[14px] border-t-2 border-l-2 border-white bg-[#20bb7e]" />
        </>
      )}
    </div>
  );
}

const HEADS: { at: string; t: string; span?: number; plain?: boolean }[] = [
  { at: "A2", t: "日期", plain: true },
  { at: "B2", t: "时间", span: 2 },
  { at: "D2", t: "地点" },
  { at: "E2", t: "主题" },
  { at: "F2", t: "主要内容" },
  { at: "G2", t: "主讲人" },
  { at: "H2", t: "参加人员" },
  { at: "I2", t: "注意事项" },
  { at: "J2", t: "备注", plain: true },
];

const ROWS = [1, 2, 3, 4, 5, 6, 7, 8, 9, 10, 11];

function Sheet() {
  return (
    <div className="relative z-0 grid h-[1220px] grid-cols-[72px_92px_52px_102px_134px_188px_289px_406px_215px_302px_196px_112px_112px_112px_112px_112px_112px_112px_10px] grid-rows-[44px_108px_56px_172px_88px_120px_86px_196px_92px_132px_94px_32px] overflow-hidden bg-white text-black [font-family:'Liberation_Serif','Noto_Sans_CJK_SC',serif]">
      <div className="flex items-end justify-end border-r-2 border-b-2 border-[#d0d3d8] bg-[#f5f6f9] pr-[9px] pb-[9px]">
        <svg width="21" height="21" viewBox="0 0 21 21" className="block">
          <path d="M21 0v21H0z" fill="#808080" />
        </svg>
      </div>
      {COLS.map((c) => (
        <div
          key={c}
          className={`flex items-center justify-center pl-[1px] text-[26.500px] text-[#46526e] [font-family:Inter,sans-serif] ${c === "G" ? "border-b-4 border-[#20bb7e] bg-[#dcdfe8] pt-[3px]" : "border-r-2 border-b-2 border-[#d0d3d8] bg-[#f5f6f9] pt-[1px]"}`}
        >
          {c}
        </div>
      ))}
      <div className="border-b-2 border-[#d0d3d8] bg-[#f5f6f9]" />

      {ROWS.map((r) => (
        <div
          key={r}
          className={`flex items-center justify-center text-[26.500px] text-[#46526e] [font-family:Inter,sans-serif] ${r === 5 ? "border-r-4 border-[#20bb7e] bg-[#dcdfe8]" : "border-r-2 border-b-2 border-r-[#d0d3d8] border-b-[#dfe2e6] bg-[#f5f6f9]"} ${r === 11 ? "pt-[7px] leading-[24px]" : "pt-[2px]"}`}
          style={{ gridColumn: 1, gridRow: r + 1 }}
        >
          {r}
        </div>
      ))}

      <div className="flex items-center justify-center border-b-2 border-black pb-[5px] text-[43.200px] font-bold whitespace-nowrap [font-family:'Noto_Sans_CJK_SC',sans-serif]" style={place("A1", 10)}>
        四川师范大学2022年专升本学生入学教育安排表（计算机科学学院）
      </div>

      {HEADS.map((h) => (
        <div
          key={h.at}
          className={`flex items-center border-r-2 border-b-2 border-black bg-[#bdd7ee] pt-[5px] ${h.plain ? "justify-start pl-[5px] text-[25px] font-[350]" : "justify-center text-[28px] font-medium"}`}
          style={place(h.at, h.span ?? 1)}
        >
          {h.t}
        </div>
      ))}

      {CELLS.map((c) => (
        <DataCell key={c.at} cell={c} />
      ))}

      <div className="flex items-center justify-center border-r-2 border-b-2 border-black bg-[#f4b084] pt-[3px] pr-[5px] text-[21.600px] font-[350]" style={place("A10", 2)}>
        备注：
      </div>
      <div className="overflow-hidden border-r-2 border-b-2 border-black bg-[#f4b084] pt-[4px] pr-[6px] pl-[3px] text-[21.700px] leading-[31.200px] font-[350] whitespace-nowrap" style={place("C10", 8)}>
        <div>
          <Mixed text="一、若有任何问题请及时与辅导员老师联系，辅导员老师：何欣烨15037037572" />
        </div>
        <div className="flex justify-between">
          <span>
            <Mixed text="二、请大家提前下载腾讯会议、钉钉直播；考勤要求：请学生提前10分钟进入会议，修改名称为如“计算机7/8班**”，辅导员老师将于会前会后考勤；" />
          </span>
          <span>三、入</span>
        </div>
        <div>学报到、开学典礼、体检（结核菌筛查）、图像信息采集和新生行课等另行安排。</div>
      </div>

      {COLS.slice(10).map((c) =>
        ROWS.map((r) => (
          <div key={c + r} className={c === "K" && r === 4 ? "z-[1] -mt-[2px] border-2 border-l-0 border-black bg-[#bdd7ee]" : "border-r-2 border-b-2 border-[#d3dbe9]"} style={place(c + r)} />
        )),
      )}
      {ROWS.map((r) => (
        <div key={r} className="border-b-2 border-[#d3dbe9]" style={{ gridColumn: 19, gridRow: r + 1 }} />
      ))}
      {COLS.slice(0, 10).map((c) => (
        <div key={c} className="border-r-2 border-[#d3dbe9]" style={place(c + "11")} />
      ))}
      <div className="z-[1] mb-[2px] w-[2px] justify-self-end bg-[#d3dbe9]" style={place("J1")} />
    </div>
  );
}

function SheetTabs() {
  return (
    <div className="flex h-[46px] border-t-2 border-b-2 border-t-[#d0d3d8] border-b-[#c8cbd3] bg-[linear-gradient(180deg,#f1f2f5,#dfe0e3)]">
      <div className="flex h-[42px] w-[241px] shrink-0 items-start border-r-2 border-[#cfd7e8] pt-[7px]">
        <Svg w={18} h={22} c="ml-[31px]" stroke="#b4b8c0">
          <path d="M1 0v22M17 0L7 11l10 11" />
        </Svg>
        <Svg w={12} h={22} c="ml-[37px]" stroke="#b4b8c0">
          <path d="M11 0L1 11l10 11" />
        </Svg>
        <Svg w={12} h={22} c="ml-[39px]" stroke="#b4b8c0">
          <path d="M1 0l10 11L1 22" />
        </Svg>
        <Svg w={18} h={22} c="ml-[38px]" stroke="#b4b8c0">
          <path d="M17 0v22M1 0l10 11L1 22" />
        </Svg>
      </div>
      <div className="-mt-[2px] flex h-[44px] w-[142px] shrink-0 items-center justify-center border-r-2 border-[#cfd7e8] bg-[linear-gradient(180deg,#ffffff,#ececee)] pt-[6px] text-[25.500px] font-medium tracking-[-0.01em] text-[#20b47a]">Sheet1</div>
      <Svg w={22} h={22} c="mt-[11px] ml-[19px]" stroke="#46526e">
        <path d="M11 0v22M0 11h22" />
      </Svg>
      <div className="mt-[8px] ml-auto h-[21px] w-[5px] shrink-0 border-x-2 border-[#b3bccd]" />
      <div className="mt-[6px] ml-[14px] flex h-[28px] w-[1103px] shrink-0 items-center rounded-l-[14px] bg-[#dfe2ea]">
        <svg width="8" height="12" viewBox="0 0 8 12" className="ml-[14px] block">
          <path d="M8 0v12L0 6z" fill="#7a8bab" />
        </svg>
        <span className="ml-[17px] h-[18px] w-[1006px] rounded-full bg-[#c8cbd1]" />
      </div>
    </div>
  );
}

function StatusBar() {
  return (
    <div className="flex h-[50px] justify-end bg-[linear-gradient(90deg,#dcdddf_0%,#dcdddf_94%,#f4f5f7_98%)]">
      <span className="mt-[8px] mr-auto ml-[82px] h-[5px] w-[4px] rounded-full bg-[#555]" />
      <span className="h-[12px] w-[45px] rounded-t-[8px] bg-[#c9ccd3]" />
      <Svg w={30} h={4} c="mt-[20px] ml-[536px]" stroke="none">
        <path d="M0 0h30v4H0z" fill="#4d5a78" />
      </Svg>
      <Svg w={24} h={24} c="mt-[10px] mr-[16px] ml-[44px]" stroke="#1d2a44" sw={4}>
        <path d="M12 0v24M0 12h24" />
      </Svg>
    </div>
  );
}

/* ------------------------------------------------------------------ */
/* Dock                                                                */
/* ------------------------------------------------------------------ */

function Tile({ c = "", children }: Kids & { c?: string }) {
  return <div className={`relative h-[90px] w-[90px] overflow-hidden rounded-[21px] shadow-[0_2px_4px_rgba(0,0,0,0.3)] ${c}`}>{children}</div>;
}

function Slot({ dot = false, w = "w-[119px]", children }: Kids & { dot?: boolean; w?: string }) {
  return (
    <div className={`flex shrink-0 flex-col items-center ${w}`}>
      <div className="flex h-[128px] items-center">{children}</div>
      {dot && <span className="h-[8px] w-[8px] rounded-full bg-[#111]/80" />}
    </div>
  );
}

function Art({ children }: Kids) {
  return (
    <svg width="90" height="90" viewBox="0 0 90 90" className="block overflow-visible">
      {children}
    </svg>
  );
}

const PAD = [
  "bg-[linear-gradient(#8fe86a,#58cf3c)]",
  "bg-[linear-gradient(#f6c944,#eea733)]",
  "bg-[linear-gradient(#efa33c,#e37a2d)]",
  "bg-[linear-gradient(#e0413a,#a8201f)]",
  "bg-[linear-gradient(#c3ced6,#7e8387)]",
  "bg-[linear-gradient(#ea4f63,#e64459)]",
  "bg-[linear-gradient(#a954dc,#6b2fa8)]",
  "bg-[linear-gradient(#55c6fb,#2d62ea)]",
  "bg-[linear-gradient(#7fd8d0,#56bb86)]",
];

function Dock() {
  const ticks = Array.from({ length: 48 }, (_, i) => i * 7.5);
  const teeth = Array.from({ length: 60 }, (_, i) => i * 6);
  return (
    <div className="absolute top-[1760px] left-[102px] z-20 flex h-[142px] w-[2736px] rounded-[40px] border-2 border-white/30 bg-[linear-gradient(180deg,rgba(255,255,255,0.24)_0%,rgba(255,255,255,0)_60%,rgba(0,0,0,0.1)_100%),linear-gradient(90deg,#dbddd9_0%,#dcdcdb_36%,#c6c8ca_41%,#8a9396_45%,#7c8689_50%,#787f81_75%,#747b7e_100%)] pl-[4px] shadow-[0_0_12px_rgba(0,0,0,0.35)]">
      <Slot dot>
        <Tile>
          <Art>
            <defs>
              <linearGradient id="fin" x1="0" y1="0" x2="0" y2="1">
                <stop offset="0" stopColor="#5fc6f8" />
                <stop offset="1" stopColor="#3a74ee" />
              </linearGradient>
              <linearGradient id="fin2" x1="0" y1="0" x2="0" y2="1">
                <stop offset="0" stopColor="#f2f2f4" />
                <stop offset="1" stopColor="#ccd6e4" />
              </linearGradient>
            </defs>
            <rect width="90" height="90" fill="url(#fin)" />
            <path d="M50 0C42 18 38 34 38 52h13c0 14 1 28 5 38h34V0z" fill="url(#fin2)" />
            <path d="M50 0C42 18 38 34 38 52h13c0 14 1 28 5 38" fill="none" stroke="#2f5f9d" strokeOpacity=".5" />
            <path d="M24 26v8M66 26v8" stroke="#16283e" strokeWidth="4" strokeLinecap="round" />
            <path d="M18 60c14 15 40 15 54 0" fill="none" stroke="#111" strokeWidth="3" strokeLinecap="round" />
          </Art>
        </Tile>
      </Slot>
      <Slot>
        <Tile c="bg-[#ededed]">
          <div className="grid grid-cols-3 gap-[6px] p-[15px]">
            {PAD.map((p) => (
              <span key={p} className={`h-[16px] w-[16px] rounded-[3px] ${p}`} />
            ))}
          </div>
        </Tile>
      </Slot>
      <Slot>
        <Tile c="bg-[linear-gradient(180deg,#fdfdfd,#cfcfcf)]">
          <Art>
            <defs>
              <linearGradient id="saf" x1="0" y1="0" x2="0" y2="1">
                <stop offset="0" stopColor="#4fa3ee" />
                <stop offset="1" stopColor="#3370dc" />
              </linearGradient>
            </defs>
            <circle cx="45" cy="45" r="39" fill="url(#saf)" />
            {ticks.map((a) => (
              <path key={a} d="M45 8v5" stroke="#fff" strokeOpacity=".75" strokeWidth="1" transform={`rotate(${a} 45 45)`} />
            ))}
            <path d="M72 20L50 50 40 41z" fill="#e0443a" />
            <path d="M18 70l22-29 10 9z" fill="#f0f0f0" />
          </Art>
        </Tile>
      </Slot>
      <Slot dot>
        <Tile c="bg-white">
          <Art>
            <circle cx="45" cy="45" r="39" fill="#e9b93f" />
            <path d="M45 45L11.200 25.500A39 39 0 0 1 78.800 25.500H45z" fill="#d9503f" />
            <path d="M11.200 25.500A39 39 0 0 0 45 84l17-29.500L45 45 28 55z" fill="#4b9c53" />
            <path d="M45 84A39 39 0 0 0 78.800 25.500H45l17 29z" fill="#f1be49" />
            <circle cx="45" cy="45" r="19" fill="#fff" />
            <circle cx="45" cy="45" r="15" fill="#4a80e8" />
          </Art>
        </Tile>
      </Slot>
      <Slot>
        <Tile c="bg-[#f8f7f5]">
          <div className="flex h-[28px] items-center justify-center bg-[#e3645a] pt-[2px] text-[18px] font-medium text-white">9月</div>
          <div className="text-center text-[56px] leading-[56px] font-light tracking-[-1px] text-[#222]">13</div>
        </Tile>
      </Slot>
      <Slot>
        <Tile c="bg-[#fbfbfa]">
          <Art>
            {["#3a7cf2", "#e0493e", "#eb9a35"].map((f, i) => (
              <g key={f} transform={`translate(0 ${i * 22.5})`}>
                <circle cx="17" cy="23" r="7" fill="none" stroke={f} strokeWidth="1.500" />
                <circle cx="17" cy="23" r="4.500" fill={f} />
                <path d="M33 23h48" stroke="#b8b9bd" strokeWidth="1.500" />
              </g>
            ))}
          </Art>
        </Tile>
      </Slot>
      <Slot>
        <Tile c="bg-[linear-gradient(180deg,#f6f6f4,#e6e6e1)]">
          <div className="h-[23px] bg-[linear-gradient(180deg,#fae073,#f6c842)]" />
          <div className="h-[5px] border-t-2 border-b-2 border-t-[#a9a395] border-b-[#dcdcda] border-dotted" />
          <div className="h-[17px] border-b-2 border-[#d6d6d4]" />
          <div className="h-[22px] border-b-2 border-[#d6d6d4]" />
        </Tile>
      </Slot>
      <Slot>
        <Tile c="bg-[linear-gradient(180deg,#ec4141,#de2d2a)]">
          <Art>
            <path d="M62 19c-6-6-16-3-14 6l6 24c2 12-16 12-16 0 0-14 26-17 31 0 5 15-8 26-23 26-17 0-28-13-28-28 0-12 8-21 18-25" fill="none" stroke="#fff" strokeWidth="5.500" strokeLinecap="round" />
          </Art>
        </Tile>
      </Slot>
      <Slot dot>
        <Tile c="bg-white">
          <Art>
            <defs>
              <linearGradient id="wps" x1="0" y1="0" x2="0" y2="1">
                <stop offset="0" stopColor="#ea3a33" />
                <stop offset="1" stopColor="#f0702f" />
              </linearGradient>
            </defs>
            <path d="M11 23h27l-3 8H24l8 28L46 23h33L62 69H49l-4-22-9 22H24z" fill="url(#wps)" />
            <path d="M61 31L47 62l-2-14 9-25h20l-3 8z" fill="#f08a34" />
            <path d="M56 31h12L56 60z" fill="#fff" />
            <path d="M54 23h24l-4 8H56z" fill="#9b2a22" />
          </Art>
        </Tile>
      </Slot>
      <Slot dot>
        <svg width="92" height="106" viewBox="0 0 92 106" className="block">
          <path d="M20 96c-12 2-10 9 2 9h48c12 0 14-7 2-9z" fill="#eca93a" />
          <path d="M46 1c22 0 33 14 33 34v16c6 8 13 20 12 32-1 5-6 0-9-6-3 16-16 27-36 27S13 93 10 77c-3 6-8 11-9 6C0 71 7 59 13 51V35C13 15 24 1 46 1z" fill="#050505" />
          <path d="M18 60h56c3 20-6 40-28 40S15 80 18 60z" fill="#fff" />
          <path d="M12 46c20 10 48 10 68 0l2 14c-22 9-50 9-72 0z" fill="#d8382e" />
          <path d="M25 60h14v16H25z" fill="#d8382e" />
          <ellipse cx="38" cy="21" rx="6" ry="9" fill="#fff" />
          <ellipse cx="55" cy="21" rx="6" ry="9" fill="#fff" />
          <circle cx="40" cy="22" r="2.500" fill="#000" />
          <path d="M51 23c2-4 5-4 7 0" stroke="#000" strokeWidth="2" fill="none" />
          <ellipse cx="46" cy="38" rx="20" ry="6" fill="#f0aa38" />
        </svg>
      </Slot>
      <Slot dot>
        <Tile c="bg-[linear-gradient(180deg,#6be07c,#5cc873)]">
          <Art>
            <path d="M34 18c14 0 24 8 24 19-16 0-25 9-22 22-4 0-8 0-10-1l-9 4 3-8c-6-4-9-10-9-16 0-11 9-20 23-20z" fill="#fff" />
            <path d="M58 37c12 0 20 8 20 18 0 5-3 9-7 12l2 6-7-3c-16 3-27-5-27-15s7-18 19-18z" fill="#fff" stroke="#5fd078" strokeWidth="1.500" />
            <g fill="#62cf76">
              <circle cx="26" cy="31" r="3" />
              <circle cx="42" cy="31" r="3" />
              <circle cx="51" cy="49" r="2.500" />
              <circle cx="64" cy="49" r="2.500" />
            </g>
          </Art>
        </Tile>
      </Slot>
      <Slot>
        <svg width="96" height="88" viewBox="0 0 96 88" className="block">
          <defs>
            <linearGradient id="tv" x1="0" y1="0" x2="0" y2="1">
              <stop offset="0" stopColor="#c2ee3f" />
              <stop offset="1" stopColor="#6aa72c" />
            </linearGradient>
            <linearGradient id="tv2" x1="0" y1="0" x2="0" y2="1">
              <stop offset="0" stopColor="#6bb9f6" />
              <stop offset="1" stopColor="#3b7cf0" />
            </linearGradient>
          </defs>
          <path d="M18 6C22-2 32 0 40 4c17 8 34 18 50 32 6 6 6 10 0 16C74 66 56 76 40 84c-8 4-18 6-22-2z" fill="url(#tv2)" />
          <path d="M2 18c1-8 6-7 16-5v62c-10 5-15 5-16-3-2-18-2-36 0-54z" fill="#f08b33" />
          <path d="M18 13c20 5 38 15 54 26 4 3 4 7 0 10-16 12-34 22-54 26-2-20-2-42 0-62z" fill="url(#tv)" />
          <path d="M28 30c0-3 2-3 4-2l24 14c2 1 2 3 0 4L32 60c-2 1-4 1-4-2z" fill="#fff" />
        </svg>
      </Slot>
      <Slot dot>
        <div className="flex h-[86px] w-[88px] items-center justify-center bg-[linear-gradient(135deg,#4fe36a_0%,#c7f04a_30%,#f2ef5a_60%,#9bdc4b_100%)]">
          <div className="h-[64px] w-[64px] bg-black pt-[5px] pl-[6px] text-white">
            <div className="text-[30px] leading-[32px] font-bold tracking-[-1px]">PC</div>
            <div className="mt-[14px] h-[4px] w-[24px] bg-white" />
          </div>
        </div>
      </Slot>
      <Slot>
        <Tile c="bg-white">
          <Art>
            <path d="M12 37l6-5 44 33-3 12z" fill="#3478c6" />
            <path d="M12 54l6 5 44-34-3-12z" fill="#2768b0" />
            <path d="M59 13l17 8v48l-17 8z" fill="#4a9be8" />
          </Art>
        </Tile>
      </Slot>
      <Slot>
        <Tile c="bg-[linear-gradient(180deg,#58b3ee,#2f60dd)]">
          <Art>
            <path d="M50 18L27 60M40 18l28 50M22 70l1-2" stroke="#fff" strokeWidth="6.500" strokeLinecap="round" />
            <path d="M15 55h60" stroke="#fff" strokeWidth="7" strokeLinecap="round" />
          </Art>
        </Tile>
      </Slot>
      <Slot>
        <Tile c="bg-[linear-gradient(180deg,#d3dee6,#8f8b88)]">
          <Art>
            <circle cx="45" cy="45" r="39" fill="#232426" />
            {teeth.map((a) => (
              <path key={a} d="M45 9v4" stroke="#a5a6a7" strokeWidth="1.800" transform={`rotate(${a} 45 45)`} />
            ))}
            <circle cx="45" cy="45" r="29" fill="#4b4e51" stroke="#b9babb" strokeWidth="4" />
            <path d="M45 45h28M45 45L31 21M45 45L31 69" stroke="#b9babb" strokeWidth="3.500" />
            <circle cx="45" cy="45" r="8" fill="#3c3d3f" stroke="#b9babb" strokeWidth="2" />
          </Art>
        </Tile>
      </Slot>
      <div className="mt-[16px] ml-[26px] h-[106px] w-[2px] bg-black/50" />
      <div className="w-[24px]" />
      <Slot dot w="w-[120px]">
        <div className="relative">
          <div className="absolute top-[6px] left-[-3px] h-[88px] w-[88px] -rotate-3 rounded-[20px] bg-[#e4e4e4]" />
          <Tile c="bg-[#fbfbfb]">
            <Art>
              <path d="M14 31h62M14 40h62M14 49h62M14 58h62M14 67h62" stroke="#ebebeb" strokeWidth="4" />
            </Art>
            <div className="-mt-[90px] text-center text-[72px] leading-[88px] font-bold text-[#262626] [font-family:'Liberation_Serif',serif]">T</div>
          </Tile>
        </div>
      </Slot>
      <Slot dot w="w-[120px]">
        <Tile c="bg-[#5b5a59]">
          <Art>
            <ellipse cx="45" cy="57" rx="35" ry="23" fill="#d5d5d5" />
            <path d="M23 58c0-7 9-12 22-12s22 5 22 12-10 12-22 12-22-5-22-12z" fill="#efb14a" />
            <path d="M27 50c1-8 8-14 16-14 9 0 17 5 18 14 0 5-5 7-9 8-3 2-6 2-9 1-8-1-16-3-16-9z" fill="#dd4f26" />
            <path d="M36 46v2M44 42v2M52 48v2M43 52v2" stroke="#6c7a2c" strokeWidth="1.500" />
            <path d="M45 32l-2-15 5-1-1 16z" fill="#e9b24d" />
            <path d="M41 17c9-1 16-3 25-9l3 3c-8 7-15 11-24 11z" fill="#cfcfcf" />
          </Art>
        </Tile>
      </Slot>
      <Slot dot w="w-[120px]">
        <div className="h-[112px] w-[112px] rounded-[26px] bg-white">
          <svg width="112" height="112" viewBox="0 0 112 112" className="block">
            <defs>
              <linearGradient id="lem" x1="0" y1="0" x2="1" y2="0">
                <stop offset="0" stopColor="#eda63c" />
                <stop offset="1" stopColor="#f7d75e" />
              </linearGradient>
            </defs>
            <path d="M7 56c0-4 2-6 6-7 3-15 18-25 36-25s33 10 36 25c8 2 8 13 0 15-3 14-18 24-36 24S16 78 13 63c-4-1-6-3-6-7z" fill="url(#lem)" />
            <path d="M52 38L37 59h10l-2 16 17-21H52z" fill="#fff" />
            <path d="M88 48c-1-9 4-14 16-15 1 9-4 16-16 15z" fill="#6fbf3c" />
          </svg>
        </div>
      </Slot>
      <div className="mt-[16px] ml-[26px] h-[106px] w-[2px] bg-black/50" />
      <div className="w-[24px]" />
      <Slot w="w-[118px]">
        <svg width="96" height="96" viewBox="0 0 96 96" className="block">
          <path d="M20 1h36l20 26v16H20z" fill="#f1f1f1" stroke="#bbb" />
          <path d="M24 6h26M24 11h28M24 16h30" stroke="#999" />
          <path d="M2 24h68l24 24v46H2z" fill="#fafafa" />
          <path d="M2 32h68v13H2z" fill="#a9c4e4" />
          <path d="M2 59h92v6H2zM2 77h92v6H2z" fill="#d6e6cc" />
          <path d="M2 91h92v4H2z" fill="#dc9468" />
          <path d="M36 28h32" stroke="#444" strokeWidth="2" />
          <path d="M2 32h70M2 37h68M2 45h68M2 51h92M2 59h92M2 65h92M2 71h92M2 77h92M2 83h92M10 32v59M18 32v59M30 32v59M44 32v59M66 32v59" stroke="#999" strokeWidth="1" />
          <path d="M14 41h50M14 55h74M14 62h74M14 68h74" stroke="#888" strokeWidth="1.500" strokeDasharray="5 4" />
          <path d="M56 2c8 8 14 24 38 48l-26-1c0-16-4-30-12-47z" fill="#e9e9e9" />
          <text x="46" y="86" textAnchor="middle" fontSize="15" fill="#444" fontFamily="Inter">
            XLSX
          </text>
        </svg>
      </Slot>
      <Slot w="w-[118px]">
        <div className="relative mt-[16px] h-[88px] w-[106px]">
          <svg width="106" height="70" viewBox="0 0 106 70" className="block">
            <path d="M0 0h106v70H0z" fill="#33373d" />
            <path d="M0 0h106v4H0z" fill="#202226" />
            <path d="M4 12h8M4 18h10M4 24h9M4 30h10M10 6h50M10 9h60" stroke="#666" />
            <path d="M34 19h65v41H34z" fill="#fafafa" />
            <path d="M70 19h24v16H70z" fill="#2b2e33" />
            <path d="M38 28h20M38 33h26" stroke="#eab0a8" strokeWidth="2" />
            <path d="M38 42h50M38 48h40M38 54h30" stroke="#ccc" />
          </svg>
          <div className="absolute right-[2px] bottom-[2px] flex h-[34px] w-[34px] items-center justify-center rounded-[8px] bg-[#f6f6f6] text-[26px] text-[#222] [font-family:'Liberation_Serif',serif]">T</div>
        </div>
      </Slot>
      <Slot w="w-[120px]">
        <svg width="80" height="104" viewBox="0 0 80 104" className="block">
          <defs>
            <linearGradient id="bin" x1="0" x2="1" y1="0" y2="0">
              <stop offset="0" stopColor="#c4c6c8" />
              <stop offset=".3" stopColor="#eceded" />
              <stop offset=".7" stopColor="#d8d9da" />
              <stop offset="1" stopColor="#b9bcbe" />
            </linearGradient>
          </defs>
          <ellipse cx="40" cy="14" rx="39" ry="10" fill="#8a8a8a" />
          <path d="M1 16c10 12 68 12 78 0l-9 78c-4 12-56 12-60 0z" fill="url(#bin)" />
          <path d="M6 18L14 6l10 2 4-7 10 9 6-3 6-6 12 10 12-2 2 8-16 8H16z" fill="#eeeeee" />
          <path d="M14 15l6-5 4 8zM48 13l10 6-12 4z" fill="#555" />
          <path d="M22 16l10-3 8 2-6 10z" fill="#3ea9d4" />
          <path d="M30 13l8 3-8 6z" fill="#55b548" />
          <path d="M48 12l8 5-8 6z" fill="#3b56a8" />
          <path d="M44 18l5 3-4 3z" fill="#c4463a" />
          <path d="M1 14c10 14 68 14 78 0" fill="none" stroke="#f4f4f4" strokeWidth="2" />
          <path d="M22 38c8 8 18 8 26-2M26 54c10 6 22 4 30-4M24 74c8-6 20-8 28 0" stroke="#e9e9ea" fill="none" strokeWidth="3" />
        </svg>
      </Slot>
    </div>
  );
}

/* ------------------------------------------------------------------ */

export default function App() {
  return (
    <div className="relative h-[1912px] w-[2940px] overflow-hidden bg-[#07131a] [font-family:Inter,'Noto_Sans_CJK_SC',sans-serif]">
      <div className="absolute top-[60px] left-0 h-[30px] w-full bg-[linear-gradient(90deg,#ead9a8_0%,#d8d2ae_12%,#7fa9b8_26%,#4a7e9a_60%,#2c567c_100%)]" />
      <div className="absolute top-[74px] left-[1003px] h-[30px] w-[935px] rounded-t-[6px] bg-[#c9cdcf]" />
      <div className="absolute top-[1500px] left-0 h-[412px] w-[1234px] bg-[#f4f4f4]">
        <div className="mt-[390px] flex h-[22px] border-t-2 border-[#dcdcdc]">
          <div className="ml-[928px] flex w-[306px] overflow-hidden bg-[#e4e4e4] pl-[34px] text-[24px] leading-[36px] text-[#555]">
            <span className="h-[36px] w-[36px] shrink-0 rounded-full bg-[#b9bcbd]" />
            <span className="ml-[14px] pt-[2px]">付博洪</span>
          </div>
        </div>
      </div>
      <MenuBar />
      <BrowserWindow />
      <div className="absolute top-[122px] left-[98px] flex h-[1678px] w-[2842px] flex-col overflow-hidden rounded-tl-[20px] rounded-bl-[20px] bg-white shadow-[0_24px_60px_rgba(0,0,0,0.55),0_0_2px_rgba(0,0,0,0.6)]">
        <TitleBar />
        <MenuRow />
        <Ribbon />
        <FormulaBar />
        <Sheet />
        <SheetTabs />
        <StatusBar />
      </div>
      <Dock />
    </div>
  );
}
